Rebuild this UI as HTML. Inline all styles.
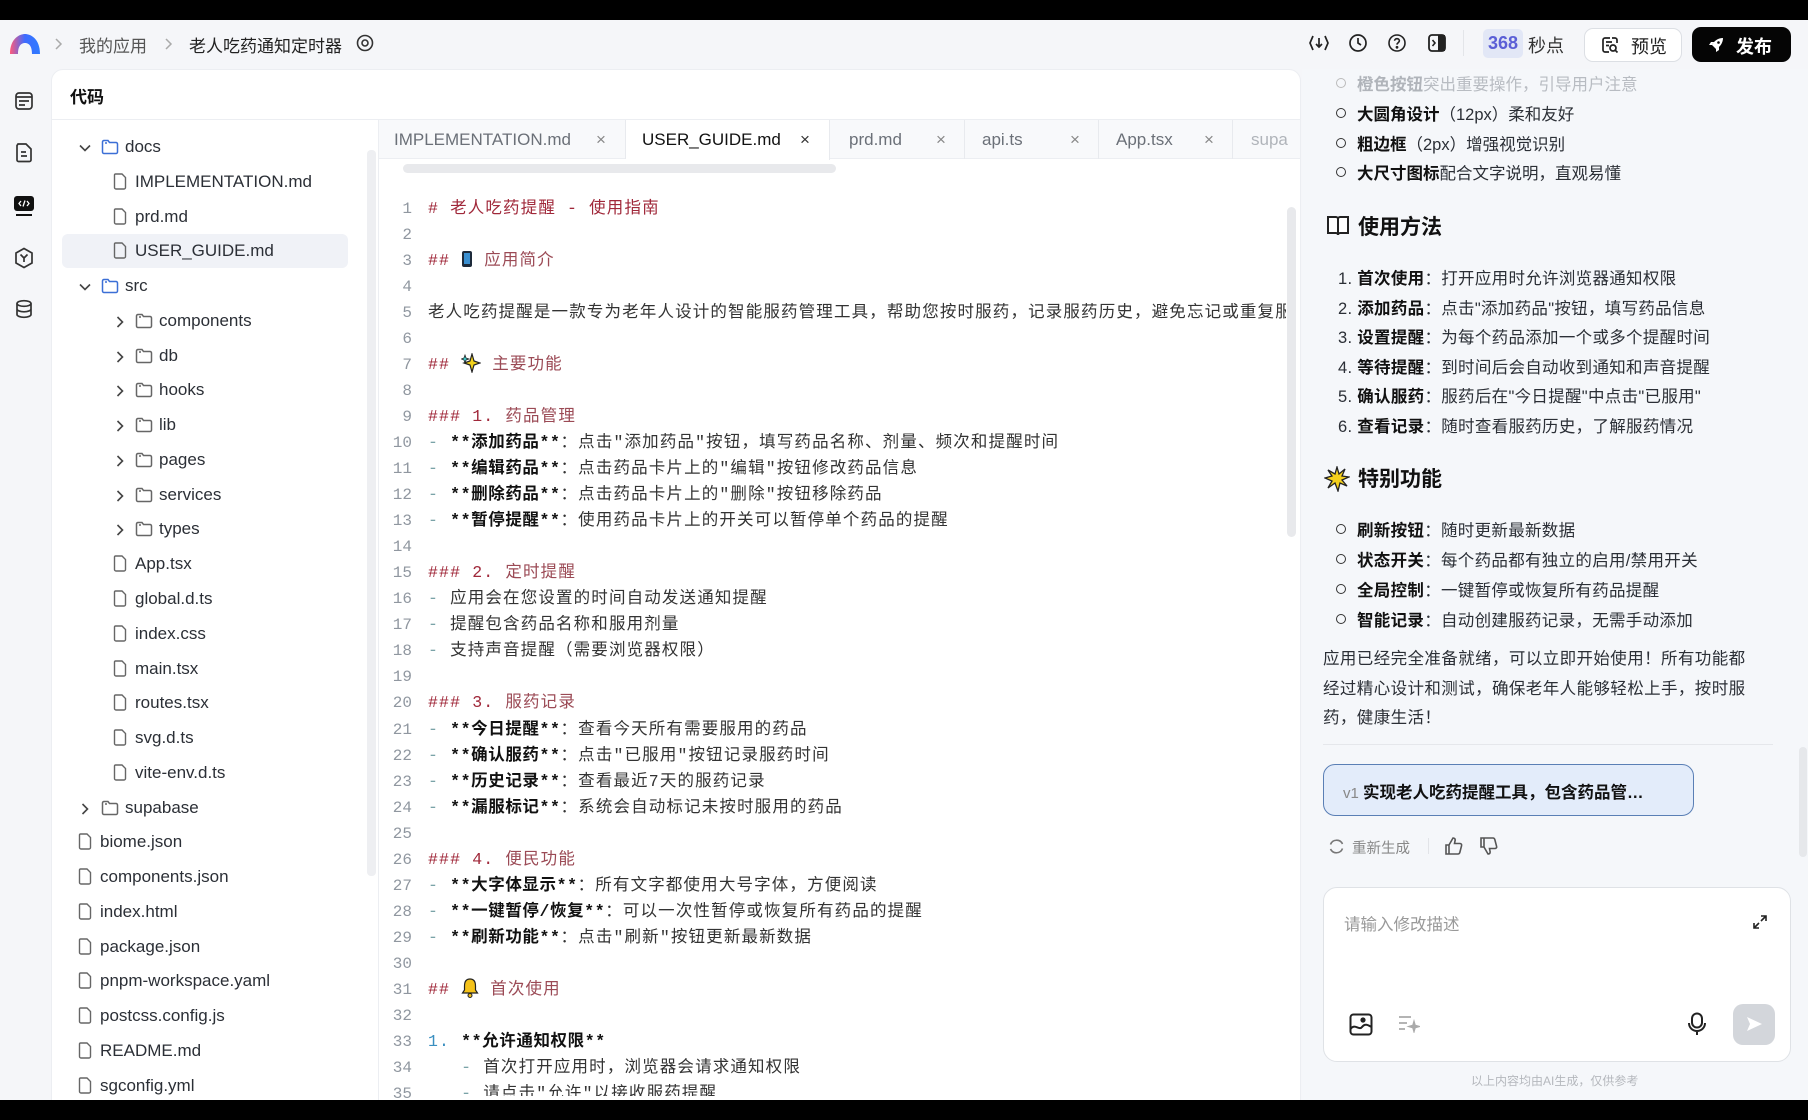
<!DOCTYPE html>
<html><head><meta charset="utf-8">
<style>
*{margin:0;padding:0;box-sizing:border-box}
body{width:1808px;height:1120px;overflow:hidden;background:#f5f6f9;font-family:"Liberation Sans","Noto Sans CJK SC",sans-serif;color:#1f2329;position:relative}
.a{position:absolute;white-space:nowrap}
.blk{position:absolute;left:0;width:1808px;background:#000}
.card{position:absolute;left:51px;top:69px;width:1250px;height:1040px;background:#fff;border:1px solid #eceef2;border-radius:12px 12px 0 0}
.tr{position:absolute;height:34px;line-height:34px;font-size:17px;color:#2b2f36}
.tr svg{position:absolute;top:9px}
.tab{position:absolute;top:120px;height:39px;line-height:39px;font-size:17px;color:#6b7078;border-right:1px solid #e8eaee}
.ln{position:absolute;left:380px;width:32px;text-align:right;font-family:"Liberation Mono",monospace;font-size:16px;color:#9097a0;height:26px;line-height:26px}
.cd{position:absolute;left:428px;font-family:"Liberation Mono","Noto Sans CJK SC",monospace;font-size:16.5px;letter-spacing:1.15px;height:26px;line-height:26px;color:#333;white-space:nowrap}
.h{color:#a0283a}.hx{color:#9b4a55}.d{color:#7aa3a8}.b{font-weight:bold;color:#111;letter-spacing:.6px}.n{color:#3a8fc0}
.rp{position:absolute;font-size:16.5px;color:#2b2f36;white-space:nowrap}
.rp b{color:#111}
.bul{position:absolute;left:1336px;width:10px;height:10px;border:1.6px solid #333;border-radius:50%}
</style></head><body>
<div class="blk" style="top:0;height:20px"></div>

<svg class="a" style="left:8px;top:32px" width="34" height="24" viewBox="0 0 34 24"><defs><linearGradient id="g" x1="0" x2="1"><stop offset="0" stop-color="#ff5a7a"/><stop offset=".5" stop-color="#3d6bff"/><stop offset="1" stop-color="#2f7bff"/></linearGradient></defs><path d="M2 22 C2 6 12 2 17 2 C22 2 32 6 32 22 L24 22 C24 14 21 11 17 11 C13 11 10 14 10 22Z" fill="url(#g)"/></svg>
<svg class="a" style="left:53px;top:37px" width="10" height="14" viewBox="0 0 10 14" fill="none" stroke="#aaa" stroke-width="1.5"><path d="M3 2 L8 7 L3 12"/></svg>
<div class="a" style="left:79px;top:32px;font-size:17px;color:#555">我的应用</div>
<svg class="a" style="left:163px;top:37px" width="10" height="14" viewBox="0 0 10 14" fill="none" stroke="#aaa" stroke-width="1.5"><path d="M3 2 L8 7 L3 12"/></svg>
<div class="a" style="left:189px;top:32px;font-size:17px;color:#222">老人吃药通知定时器</div>
<svg class="a" style="left:356px;top:34px" width="18" height="18" viewBox="0 0 18 18"><circle cx="9" cy="9" r="7.5" fill="none" stroke="#333" stroke-width="1.6"/><circle cx="9" cy="9" r="3" fill="none" stroke="#333" stroke-width="1.6"/></svg>

<svg class="a" style="left:1308px;top:33px" width="22" height="20" viewBox="0 0 22 20" fill="none" stroke="#222" stroke-width="1.7"><path d="M5 3 L2 10 L5 17 M17 3 L20 10 L17 17 M11 5 V14 M8 11 L11 14 L14 11"/></svg>
<svg class="a" style="left:1348px;top:33px" width="20" height="20" viewBox="0 0 20 20" fill="none" stroke="#222" stroke-width="1.7"><circle cx="10" cy="10" r="8"/><path d="M10 5 V10 L13 12"/></svg>
<svg class="a" style="left:1387px;top:33px" width="20" height="20" viewBox="0 0 20 20" fill="none" stroke="#222" stroke-width="1.6"><circle cx="10" cy="10" r="8"/><path d="M7.6 7.8 C7.6 5 12.4 5 12.4 7.8 C12.4 9.6 10 9.6 10 11.6"/><circle cx="10" cy="14.3" r=".6" fill="#222"/></svg>
<svg class="a" style="left:1427px;top:33px" width="20" height="20" viewBox="0 0 20 20"><rect x="2" y="2" width="16" height="16" rx="3" fill="none" stroke="#222" stroke-width="1.8"/><rect x="11" y="2" width="7" height="16" fill="#222"/><path d="M5.5 7 L8 10 L5.5 13" fill="none" stroke="#222" stroke-width="1.6"/></svg>
<div class="a" style="left:1463px;top:30px;width:1px;height:26px;background:#e3e5e9"></div>
<div class="a" style="left:1483px;top:29px;width:40px;height:29px;border-radius:5px;background:#e2e7f6;text-align:center;line-height:29px;font-size:18px;font-weight:bold;color:#5b5fd6">368</div>
<div class="a" style="left:1528px;top:32px;font-size:18px;color:#333">秒点</div>
<div class="a" style="left:1584px;top:28px;width:98px;height:34px;border:1px solid #dcdfe4;border-radius:9px;background:#fff"></div>
<svg class="a" style="left:1601px;top:36px" width="18" height="18" viewBox="0 0 18 18" fill="none" stroke="#222" stroke-width="1.7"><path d="M9 2 H4 A2 2 0 0 0 2 4 V14 A2 2 0 0 0 4 16 H8 M5 6 H11 M5 9.5 H8"/><circle cx="12" cy="12" r="3"/><path d="M14.2 14.2 L16.5 16.5"/><path d="M11 2 H14 A2 2 0 0 1 16 4 V7"/></svg>
<div class="a" style="left:1631px;top:33px;font-size:18px;color:#222">预览</div>
<div class="a" style="left:1692px;top:27px;width:99px;height:35px;border-radius:9px;background:#050505"></div>
<svg class="a" style="left:1707px;top:36px" width="18" height="18" viewBox="0 0 18 18"><path d="M16 2 C11 2 7 5 5 9 L9 13 C13 11 16 7 16 2Z M5 9 L2 9 L4 6 H7Z M9 13 V16 L12 14 V11Z" fill="#fff"/><circle cx="11.5" cy="6.5" r="1.3" fill="#000"/></svg>
<div class="a" style="left:1736px;top:33px;font-size:18px;color:#fff;font-weight:bold">发布</div>

<svg class="a" style="left:14px;top:91px" width="20" height="20" viewBox="0 0 20 20" fill="none" stroke="#333" stroke-width="1.7"><rect x="2" y="2" width="16" height="16" rx="3"/><path d="M2 6 H18 M5 10 H15 M5 14 H11"/></svg>
<svg class="a" style="left:15px;top:142px" width="18" height="21" viewBox="0 0 18 21" fill="none" stroke="#333" stroke-width="1.7"><path d="M3 2 H11 L16 7 V18 A1.5 1.5 0 0 1 14.5 19.5 H3.5 A1.5 1.5 0 0 1 2 18 V3.5Z M6 10 H11 M6 14 H12"/></svg>
<svg class="a" style="left:13px;top:195px" width="22" height="22" viewBox="0 0 22 22"><rect x="1" y="1" width="20" height="15" rx="3" fill="#111"/><path d="M8 6 L6 8.5 L8 11 M14 6 L16 8.5 L14 11 M12 5.5 L10 11.5" stroke="#fff" stroke-width="1.3" fill="none"/><rect x="3" y="19" width="16" height="2" fill="#111"/></svg>
<svg class="a" style="left:14px;top:247px" width="20" height="22" viewBox="0 0 20 22" fill="none" stroke="#333" stroke-width="1.7"><path d="M10 1.5 L18 6 V16 L10 20.5 L2 16 V6Z M6.5 7.5 L10 11 L13.5 7.5 M10 11 V15"/></svg>
<svg class="a" style="left:14px;top:299px" width="20" height="20" viewBox="0 0 20 20" fill="none" stroke="#333" stroke-width="1.7"><ellipse cx="10" cy="4.5" rx="7" ry="2.8"/><path d="M3 4.5 V15.5 C3 17 6 18.3 10 18.3 C14 18.3 17 17 17 15.5 V4.5 M3 10 C3 11.5 6 12.8 10 12.8 C14 12.8 17 11.5 17 10"/></svg>

<div class="card"></div>
<div class="a" style="left:70px;top:83px;font-size:17px;font-weight:bold;color:#111">代码</div>
<div class="a" style="left:52px;top:119px;width:1248px;height:1px;background:#eceef2"></div>
<div class="a" style="left:378px;top:120px;width:1px;height:980px;background:#eceef2"></div>

<div class="a" style="left:62px;top:234px;width:286px;height:34px;background:#f0f2f7;border-radius:6px"></div>
<div class="a" style="left:367px;top:150px;width:9px;height:726px;background:#eeeff2;border-radius:4px"></div>
<div id="tree"></div>

<div class="a" style="left:379px;top:120px;width:921px;height:39px;background:#f8f9fb;border-bottom:1px solid #eceef2"></div>
<div class="tab" style="left:380px;width:246px;padding-left:14px">IMPLEMENTATION.md<span class="a" style="left:216px;color:#888;font-size:17px">×</span></div>
<div class="tab" style="left:626px;width:204px;padding-left:16px;background:#fff;color:#111;height:40px">USER_GUIDE.md<span class="a" style="left:174px;color:#333;font-size:17px">×</span></div>
<div class="tab" style="left:830px;width:135px;padding-left:19px">prd.md<span class="a" style="left:106px;color:#888;font-size:17px">×</span></div>
<div class="tab" style="left:965px;width:134px;padding-left:17px">api.ts<span class="a" style="left:105px;color:#888;font-size:17px">×</span></div>
<div class="tab" style="left:1099px;width:134px;padding-left:17px">App.tsx<span class="a" style="left:105px;color:#888;font-size:17px">×</span></div>
<div class="tab" style="left:1233px;width:67px;padding-left:18px;color:#b0b4ba;border:none;overflow:hidden">supa</div>
<div class="a" style="left:403px;top:164px;width:433px;height:9px;background:#e8e9ec;border-radius:5px"></div>
<div class="a" style="left:1287px;top:207px;width:9px;height:330px;background:#e8e9ec;border-radius:5px"></div>

<div id="code"></div>

<div class="a" style="left:1302px;top:69px;width:506px;height:1031px;background:#f5f7fa"></div>
<div class="bul" style="top:78px;border-color:#bbb"></div>
<div class="rp" style="left:1357px;top:71px;color:#b8bcc2"><b style="color:#b0b4ba">橙色按钮</b>突出重要操作，引导用户注意</div>
<div class="bul" style="top:108px"></div><div class="rp" style="left:1357px;top:101px"><b>大圆角设计</b>（12px）柔和友好</div>
<div class="bul" style="top:138px"></div><div class="rp" style="left:1357px;top:131px"><b>粗边框</b>（2px）增强视觉识别</div>
<div class="bul" style="top:167px"></div><div class="rp" style="left:1357px;top:160px"><b>大尺寸图标</b>配合文字说明，直观易懂</div>
<svg class="a" style="left:1326px;top:215px" width="24" height="22" viewBox="0 0 24 22"><path d="M2 2 H10 C11 2 12 3 12 4 V20 C12 19 11 18 10 18 H2Z M22 2 H14 C13 2 12 3 12 4 V20 C12 19 13 18 14 18 H22Z" fill="#fff" stroke="#222" stroke-width="2"/></svg>
<div class="rp" style="left:1358px;top:211px;font-size:21px;font-weight:bold;color:#111">使用方法</div>
<div id="ol"></div>
<svg class="a" style="left:1324px;top:466px" width="26" height="26" viewBox="0 0 26 26"><path d="M13 1 L15 8 L21 3 L18 10 L25 11 L18 14 L23 20 L16 17 L14 25 L11 17 L4 22 L8 15 L1 12 L8 10 L4 4 L11 8Z" fill="#f5d01c" stroke="#222" stroke-width="1.3"/></svg>
<div class="rp" style="left:1358px;top:463px;font-size:21px;font-weight:bold;color:#111">特别功能</div>
<div id="ul"></div>
<div class="rp" style="left:1323px;top:645px;line-height:29.5px;white-space:normal;width:428px;letter-spacing:.4px">应用已经完全准备就绪，可以立即开始使用！所有功能都经过精心设计和测试，确保老年人能够轻松上手，按时服药，健康生活！</div>
<div class="a" style="left:1323px;top:744px;width:450px;height:1px;background:#e5e7eb"></div>
<div class="a" style="left:1323px;top:764px;width:371px;height:52px;background:#e3ecfa;border:1.5px solid #5a7fb5;border-radius:12px"></div>
<div class="rp" style="left:1343px;top:779px"><span style="color:#888;font-size:15px">v1 </span><b style="font-size:16.5px">实现老人吃药提醒工具，包含药品管…</b></div>
<svg class="a" style="left:1328px;top:838px" width="17" height="17" viewBox="0 0 17 17" fill="none" stroke="#777" stroke-width="1.6"><path d="M14.5 6 A6.5 6.5 0 0 0 2.5 6.5 M2.5 11 A6.5 6.5 0 0 0 14.5 10.5"/></svg>
<div class="rp" style="left:1352px;top:837px;font-size:14.5px;color:#888">重新生成</div>
<div class="a" style="left:1428px;top:838px;width:1px;height:16px;background:#e2e4e8"></div>
<svg class="a" style="left:1444px;top:836px" width="20" height="20" viewBox="0 0 20 20" fill="none" stroke="#555" stroke-width="1.6"><path d="M2 9 H5 V18 H2Z M5 9 L9 2 C11 2 11.5 3.5 11 5 L10.5 7.5 H16 C17 7.5 18 8.5 17.6 9.6 L15.8 16.5 C15.5 17.4 14.8 18 14 18 H5"/></svg>
<svg class="a" style="left:1479px;top:836px" width="20" height="20" viewBox="0 0 20 20" fill="none" stroke="#555" stroke-width="1.6"><path d="M2 2 H5 V11 H2Z M5 11 L9 18 C11 18 11.5 16.5 11 15 L10.5 12.5 H16 C17 12.5 18 11.5 17.6 10.4 L15.8 3.5 C15.5 2.6 14.8 2 14 2 H5"/></svg>
<div class="a" style="left:1799px;top:747px;width:8px;height:110px;background:#e6e8eb;border-radius:4px"></div>
<div class="a" style="left:1323px;top:887px;width:468px;height:175px;background:#fff;border:1px solid #dfe2e6;border-radius:14px"></div>
<div class="rp" style="left:1344px;top:911px;font-size:16.5px;color:#999">请输入修改描述</div>
<svg class="a" style="left:1752px;top:914px" width="16" height="16" viewBox="0 0 16 16" fill="none" stroke="#222" stroke-width="1.6"><path d="M9 2 H14 V7 M14 2 L9 7 M7 14 H2 V9 M2 14 L7 9"/></svg>
<svg class="a" style="left:1349px;top:1013px" width="24" height="23" viewBox="0 0 24 23" fill="none" stroke="#222" stroke-width="2"><rect x="1.5" y="1.5" width="21" height="20" rx="3"/><path d="M1.5 16 C6 10 10 18 13 14 C16 10 19 12 22.5 14"/><circle cx="14" cy="7" r="1.6" fill="#222"/></svg>
<svg class="a" style="left:1398px;top:1015px" width="22" height="18" viewBox="0 0 22 18" fill="none" stroke="#aaa" stroke-width="1.7"><path d="M1 2 H13 M1 8 H9 M1 14 H7"/><path d="M16 7 L17 10.5 L20.5 11.5 L17 12.5 L16 16 L15 12.5 L11.5 11.5 L15 10.5Z" fill="#aaa"/></svg>
<svg class="a" style="left:1687px;top:1012px" width="20" height="24" viewBox="0 0 20 24" fill="none" stroke="#222" stroke-width="2"><rect x="5" y="1.5" width="10" height="14" rx="5"/><path d="M2 11 C2 16 6 19 10 19 C14 19 18 16 18 11 M10 19 V23"/></svg>
<div class="a" style="left:1733px;top:1004px;width:42px;height:41px;border-radius:10px;background:#d3d6db"></div>
<svg class="a" style="left:1745px;top:1015px" width="18" height="18" viewBox="0 0 18 18"><path d="M2 2 L17 9 L2 16 L5 9Z" fill="#fff"/></svg>
<div class="rp" style="left:1471px;top:1072px;font-size:12px;color:#b5b8bd">以上内容均由AI生成，仅供参考</div>

<div class="blk" style="top:1100px;height:20px"></div>

<script>
(function(){
var T=document.getElementById('tree'),h='';
function chev(x,down){return '<svg width="14" height="14" viewBox="0 0 14 14" fill="none" stroke="#444" stroke-width="1.6" style="left:'+x+'px;top:11px"><path d="'+(down?'M2 4.5 L7 9.5 L12 4.5':'M4.5 2 L9.5 7 L4.5 12')+'"/></svg>';}
function fold(x,c){return '<svg width="18" height="16" viewBox="0 0 18 16" fill="none" stroke="'+c+'" stroke-width="1.5" style="left:'+x+'px"><path d="M1.5 3 A1.5 1.5 0 0 1 3 1.5 H7 L8.5 3.5 H15 A1.5 1.5 0 0 1 16.5 5 V13 A1.5 1.5 0 0 1 15 14.5 H3 A1.5 1.5 0 0 1 1.5 13Z M4 4 H6"/></svg>';}
function file(x){return '<svg width="14" height="17" viewBox="0 0 14 17" fill="none" stroke="#666" stroke-width="1.4" style="left:'+x+'px;top:8px"><path d="M2.5 1 H9 L12.5 4.5 V14.5 A1.5 1.5 0 0 1 11 16 H3 A1.5 1.5 0 0 1 1.5 14.5 V2 A1 1 0 0 1 2.5 1Z"/></svg>';}
var rows=[
['d0','docs',1],['f1','IMPLEMENTATION.md'],['f1','prd.md'],['f1','USER_GUIDE.md'],['d0','src',1],
['d1','components'],['d1','db'],['d1','hooks'],['d1','lib'],['d1','pages'],['d1','services'],['d1','types'],
['f1','App.tsx'],['f1','global.d.ts'],['f1','index.css'],['f1','main.tsx'],['f1','routes.tsx'],['f1','svg.d.ts'],['f1','vite-env.d.ts'],
['d0','supabase',0],['f0','biome.json'],['f0','components.json'],['f0','index.html'],['f0','package.json'],['f0','pnpm-workspace.yaml'],['f0','postcss.config.js'],['f0','README.md'],['f0','sgconfig.yml']];
rows.forEach(function(r,i){
 var top=130+34.77*i,s='';
 if(r[0]=='d0'){s=chev(78,r[2])+fold(101,r[2]?'#3b6fd6':'#666')+'<span class="a" style="left:125px">'+r[1]+'</span>';}
 else if(r[0]=='d1'){s=chev(113,0)+fold(135,'#666')+'<span class="a" style="left:159px">'+r[1]+'</span>';}
 else if(r[0]=='f1'){s=file(113)+'<span class="a" style="left:135px">'+r[1]+'</span>';}
 else {s=file(78)+'<span class="a" style="left:100px">'+r[1]+'</span>';}
 h+='<div class="tr" style="left:0;top:'+top+'px;width:370px;height:34px;'+(i==27?'overflow:hidden;height:28px':'')+'">'+s+'</div>';
});
T.innerHTML=h;
var phone='<svg width="12" height="18" viewBox="0 0 12 18" style="vertical-align:-3px"><rect x="1" y="1" width="10" height="16" rx="2" fill="#1d2a3a"/><rect x="3" y="3" width="6" height="11" fill="#3a8fd0"/></svg>';
var spark='<svg width="20" height="20" viewBox="0 0 20 20" style="vertical-align:-4px"><path d="M11 1 L13 8 L19 10 L13 12 L11 19 L9 12 L3 10 L9 8Z" fill="#f3d21a" stroke="#222" stroke-width="1.2"/><path d="M4 2 L5 5 L8 6 L5 7 L4 10 L3 7 L0.5 6 L3 5Z" fill="#4dd" stroke="#222" stroke-width=".8"/></svg>';
var bell='<svg width="18" height="20" viewBox="0 0 18 20" style="vertical-align:-4px"><path d="M9 1 C5 1 3.5 4 3.5 8 V12 L1.5 15 H16.5 L14.5 12 V8 C14.5 4 13 1 9 1Z" fill="#f4c21a" stroke="#222" stroke-width="1.2"/><circle cx="9" cy="17.5" r="2" fill="#f4c21a" stroke="#222" stroke-width="1"/></svg>';
var L=[
'<span class="h"># 老人吃药提醒 - 使用指南</span>','',
'<span class="h">## '+phone+' </span><span class="hx">应用简介</span>','',
'老人吃药提醒是一款专为老年人设计的智能服药管理工具，帮助您按时服药，记录服药历史，避免忘记或重复服药。','',
'<span class="h">## '+spark+' </span><span class="hx">主要功能</span>','',
'<span class="h">### 1. </span><span class="hx">药品管理</span>',
'<span class="d">- </span><span class="b">**添加药品**</span>：点击"添加药品"按钮，填写药品名称、剂量、频次和提醒时间',
'<span class="d">- </span><span class="b">**编辑药品**</span>：点击药品卡片上的"编辑"按钮修改药品信息',
'<span class="d">- </span><span class="b">**删除药品**</span>：点击药品卡片上的"删除"按钮移除药品',
'<span class="d">- </span><span class="b">**暂停提醒**</span>：使用药品卡片上的开关可以暂停单个药品的提醒','',
'<span class="h">### 2. </span><span class="hx">定时提醒</span>',
'<span class="d">- </span>应用会在您设置的时间自动发送通知提醒',
'<span class="d">- </span>提醒包含药品名称和服用剂量',
'<span class="d">- </span>支持声音提醒（需要浏览器权限）','',
'<span class="h">### 3. </span><span class="hx">服药记录</span>',
'<span class="d">- </span><span class="b">**今日提醒**</span>：查看今天所有需要服用的药品',
'<span class="d">- </span><span class="b">**确认服药**</span>：点击"已服用"按钮记录服药时间',
'<span class="d">- </span><span class="b">**历史记录**</span>：查看最近7天的服药记录',
'<span class="d">- </span><span class="b">**漏服标记**</span>：系统会自动标记未按时服用的药品','',
'<span class="h">### 4. </span><span class="hx">便民功能</span>',
'<span class="d">- </span><span class="b">**大字体显示**</span>：所有文字都使用大号字体，方便阅读',
'<span class="d">- </span><span class="b">**一键暂停/恢复**</span>：可以一次性暂停或恢复所有药品的提醒',
'<span class="d">- </span><span class="b">**刷新功能**</span>：点击"刷新"按钮更新最新数据','',
'<span class="h">## '+bell+' </span><span class="hx">首次使用</span>','',
'<span class="n">1. </span><span class="b">**允许通知权限**</span>',
'&nbsp;&nbsp;&nbsp;<span class="d">- </span>首次打开应用时，浏览器会请求通知权限',
'&nbsp;&nbsp;&nbsp;<span class="d">- </span>请点击"允许"以接收服药提醒'];
var c='';
L.forEach(function(t,i){var top=195.5+26.05*i;
 c+='<div class="ln" style="top:'+top+'px">'+(i+1)+'</div><div class="cd" style="top:'+top+'px;width:858px;overflow:hidden'+(i==34?';height:15px':'')+'">'+t+'</div>';});
document.getElementById('code').innerHTML=c;
var ol=[['首次使用','打开应用时允许浏览器通知权限'],['添加药品','点击"添加药品"按钮，填写药品信息'],['设置提醒','为每个药品添加一个或多个提醒时间'],['等待提醒','到时间后会自动收到通知和声音提醒'],['确认服药','服药后在"今日提醒"中点击"已服用"'],['查看记录','随时查看服药历史，了解服药情况']];
var o='';ol.forEach(function(r,i){var top=265+29.6*i;o+='<div class="rp" style="left:1338px;top:'+top+'px;letter-spacing:.3px">'+(i+1)+'. <b>'+r[0]+'</b>：'+r[1]+'</div>';});
document.getElementById('ol').innerHTML=o;
var ul=[['刷新按钮','随时更新最新数据'],['状态开关','每个药品都有独立的启用/禁用开关'],['全局控制','一键暂停或恢复所有药品提醒'],['智能记录','自动创建服药记录，无需手动添加']];
var u='';ul.forEach(function(r,i){var top=517+30*i;u+='<div class="bul" style="top:'+(top+7)+'px"></div><div class="rp" style="left:1357px;top:'+top+'px;letter-spacing:.3px"><b>'+r[0]+'</b>：'+r[1]+'</div>';});
document.getElementById('ul').innerHTML=u;
})();
</script>
</body></html>
